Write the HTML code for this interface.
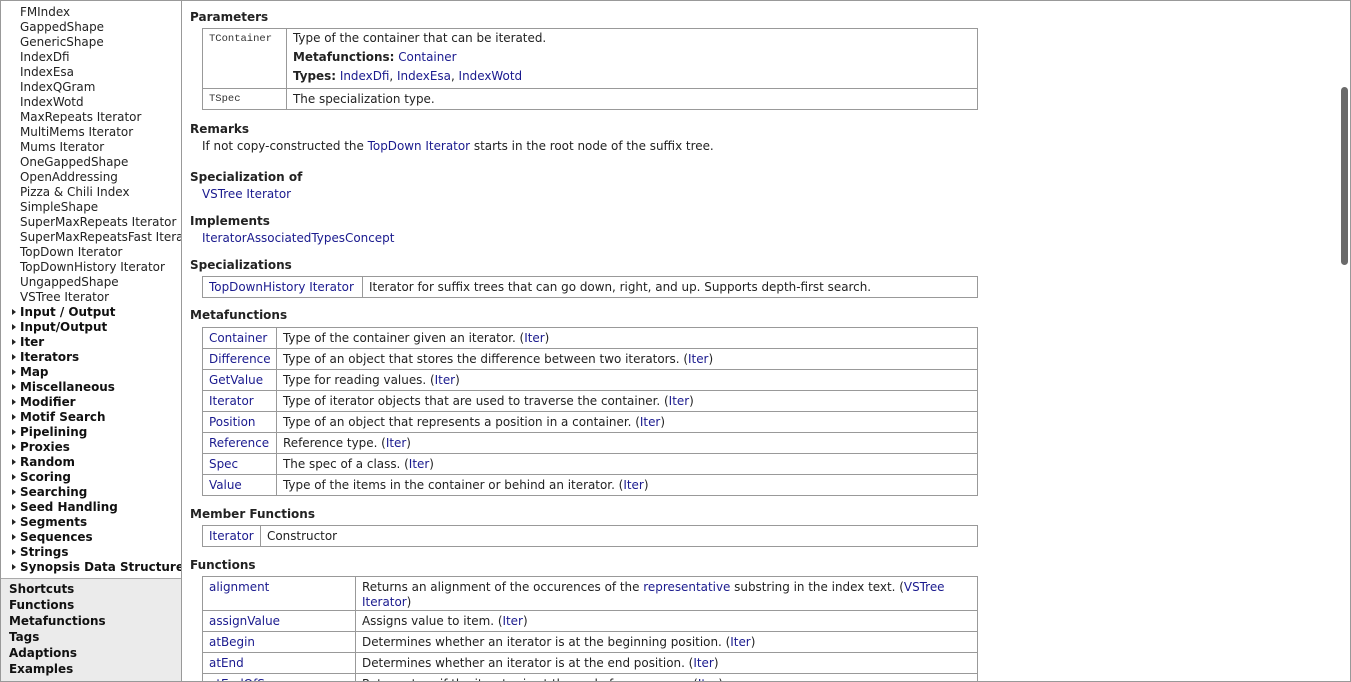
<!DOCTYPE html>
<html><head><meta charset="utf-8"><style>
*{margin:0;padding:0;box-sizing:border-box}
html,body{width:1351px;height:682px;overflow:hidden;background:#fff}
body{position:relative;font-family:"DejaVu Sans","Liberation Sans",sans-serif;font-size:11.95px;color:#222}
.frame{position:absolute;left:0;top:0;width:1351px;height:682px;border:1px solid #999;pointer-events:none}
a{color:#1a1a8e;text-decoration:none}
.t,.si,h3,.bi{transform:translateY(1px)}
.t{position:absolute;white-space:nowrap;line-height:15px}
.side{position:absolute;left:0;top:0;width:182px;height:682px;border-right:1px solid #999;overflow:hidden}
.si{position:absolute;left:20px;white-space:nowrap;line-height:15px}
.g{font-weight:bold;color:#111}
.g:before{content:"";position:absolute;left:-8px;top:4px;border-left:4px solid #222;border-top:3.5px solid transparent;border-bottom:3.5px solid transparent}
.bot{position:absolute;left:0;top:578px;width:181px;height:104px;background:#ebebeb;border-top:1px solid #aaa}
.bi{position:absolute;left:9px;font-weight:bold;color:#111;line-height:16px}
h3{position:absolute;left:190px;font-size:12px;font-weight:bold;color:#222;line-height:15px;white-space:nowrap}
table{position:absolute;left:202px;width:776px;border-collapse:collapse;table-layout:fixed}
td{border:1px solid #999;padding:1px 6px 0;vertical-align:top;line-height:19px;white-space:nowrap;overflow:hidden}
tr{height:21px}
.mono{font-family:"Liberation Mono",monospace;font-size:10.5px;color:#333}
.sb{position:absolute;left:1341px;top:87px;width:7px;height:178px;background:#6a6a6a;border-radius:4px}
</style></head><body>
<div class="side">
<div class="si" style="top:-11px">Fibre Iterator</div>
<div class="si" style="top:4px">FMIndex</div>
<div class="si" style="top:19px">GappedShape</div>
<div class="si" style="top:34px">GenericShape</div>
<div class="si" style="top:49px">IndexDfi</div>
<div class="si" style="top:64px">IndexEsa</div>
<div class="si" style="top:79px">IndexQGram</div>
<div class="si" style="top:94px">IndexWotd</div>
<div class="si" style="top:109px">MaxRepeats Iterator</div>
<div class="si" style="top:124px">MultiMems Iterator</div>
<div class="si" style="top:139px">Mums Iterator</div>
<div class="si" style="top:154px">OneGappedShape</div>
<div class="si" style="top:169px">OpenAddressing</div>
<div class="si" style="top:184px">Pizza &amp; Chili Index</div>
<div class="si" style="top:199px">SimpleShape</div>
<div class="si" style="top:214px">SuperMaxRepeats Iterator</div>
<div class="si" style="top:229px">SuperMaxRepeatsFast Iterator</div>
<div class="si" style="top:244px">TopDown Iterator</div>
<div class="si" style="top:259px">TopDownHistory Iterator</div>
<div class="si" style="top:274px">UngappedShape</div>
<div class="si" style="top:289px">VSTree Iterator</div>
<div class="si g" style="top:304px">Input / Output</div>
<div class="si g" style="top:319px">Input/Output</div>
<div class="si g" style="top:334px">Iter</div>
<div class="si g" style="top:349px">Iterators</div>
<div class="si g" style="top:364px">Map</div>
<div class="si g" style="top:379px">Miscellaneous</div>
<div class="si g" style="top:394px">Modifier</div>
<div class="si g" style="top:409px">Motif Search</div>
<div class="si g" style="top:424px">Pipelining</div>
<div class="si g" style="top:439px">Proxies</div>
<div class="si g" style="top:454px">Random</div>
<div class="si g" style="top:469px">Scoring</div>
<div class="si g" style="top:484px">Searching</div>
<div class="si g" style="top:499px">Seed Handling</div>
<div class="si g" style="top:514px">Segments</div>
<div class="si g" style="top:529px">Sequences</div>
<div class="si g" style="top:544px">Strings</div>
<div class="si g" style="top:559px">Synopsis Data Structures</div>
<div class="bot">
<div class="bi" style="top:1px">Shortcuts</div>
<div class="bi" style="top:17px">Functions</div>
<div class="bi" style="top:33px">Metafunctions</div>
<div class="bi" style="top:49px">Tags</div>
<div class="bi" style="top:65px">Adaptions</div>
<div class="bi" style="top:81px">Examples</div>
</div>
</div>

<h3 style="top:9px">Parameters</h3>
<table style="top:28px"><colgroup><col style="width:84px"><col></colgroup>
<tr style="height:60px"><td class="mono" style="line-height:18px">TContainer</td><td style="line-height:19px;padding-top:0">Type of the container that can be iterated.<br><b>Metafunctions:</b> <a>Container</a><br><b>Types:</b> <a>IndexDfi</a>, <a>IndexEsa</a>, <a>IndexWotd</a></td></tr>
<tr><td class="mono">TSpec</td><td>The specialization type.</td></tr>
</table>
<h3 style="top:121px">Remarks</h3>
<div class="t" style="left:202px;top:138px">If not copy-constructed the <a>TopDown Iterator</a> starts in the root node of the suffix tree.</div>
<h3 style="top:169px">Specialization of</h3>
<div class="t" style="left:202px;top:186px"><a>VSTree Iterator</a></div>
<h3 style="top:213px">Implements</h3>
<div class="t" style="left:202px;top:230px"><a>IteratorAssociatedTypesConcept</a></div>
<h3 style="top:257px">Specializations</h3>
<table style="top:276px"><colgroup><col style="width:160px"><col></colgroup>
<tr><td><a>TopDownHistory Iterator</a></td><td>Iterator for suffix trees that can go down, right, and up. Supports depth-first search.</td></tr>
</table>
<h3 style="top:307px">Metafunctions</h3>
<table style="top:327px"><colgroup><col style="width:74px"><col></colgroup>
<tr><td><a>Container</a></td><td>Type of the container given an iterator. (<a>Iter</a>)</td></tr>
<tr><td><a>Difference</a></td><td>Type of an object that stores the difference between two iterators. (<a>Iter</a>)</td></tr>
<tr><td><a>GetValue</a></td><td>Type for reading values. (<a>Iter</a>)</td></tr>
<tr><td><a>Iterator</a></td><td>Type of iterator objects that are used to traverse the container. (<a>Iter</a>)</td></tr>
<tr><td><a>Position</a></td><td>Type of an object that represents a position in a container. (<a>Iter</a>)</td></tr>
<tr><td><a>Reference</a></td><td>Reference type. (<a>Iter</a>)</td></tr>
<tr><td><a>Spec</a></td><td>The spec of a class. (<a>Iter</a>)</td></tr>
<tr><td><a>Value</a></td><td>Type of the items in the container or behind an iterator. (<a>Iter</a>)</td></tr>
</table>
<h3 style="top:506px">Member Functions</h3>
<table style="top:525px"><colgroup><col style="width:58px"><col></colgroup>
<tr><td><a>Iterator</a></td><td>Constructor</td></tr>
</table>
<h3 style="top:557px">Functions</h3>
<table style="top:576px"><colgroup><col style="width:153px"><col></colgroup>
<tr style="height:33px"><td><a>alignment</a></td><td style="line-height:15px;padding-top:3px">Returns an alignment of the occurences of the <a>representative</a> substring in the index text. (<a>VSTree</a><br><a>Iterator</a>)</td></tr>
<tr><td><a>assignValue</a></td><td>Assigns value to item. (<a>Iter</a>)</td></tr>
<tr><td><a>atBegin</a></td><td>Determines whether an iterator is at the beginning position. (<a>Iter</a>)</td></tr>
<tr><td><a>atEnd</a></td><td>Determines whether an iterator is at the end position. (<a>Iter</a>)</td></tr>
<tr><td><a>atEndOfSequence</a></td><td>Returns true if the iterator is at the end of a sequence. (<a>Iter</a>)</td></tr>
</table>
<div class="sb"></div>
<div class="frame"></div>
</body></html>
